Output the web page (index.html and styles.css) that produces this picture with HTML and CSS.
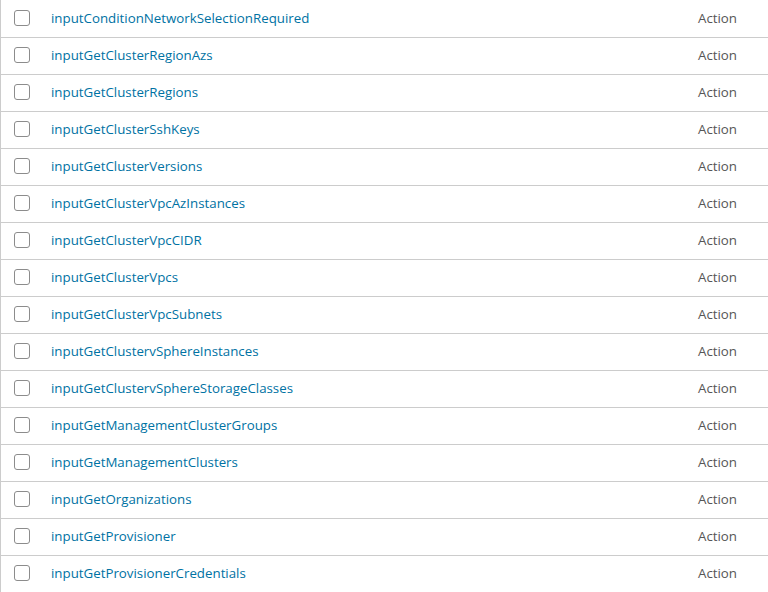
FILE: index.html
```html
<!DOCTYPE html>
<html>
<head>
<meta charset="utf-8">
<link rel="stylesheet" href="styles.css">
</head>
<body>
<div class="grid">
  <div class="row"><span class="check"></span><a class="name">inputConditionNetworkSelectionRequired</a><span class="type">Action</span></div>
  <div class="row"><span class="check"></span><a class="name">inputGetClusterRegionAzs</a><span class="type">Action</span></div>
  <div class="row"><span class="check"></span><a class="name">inputGetClusterRegions</a><span class="type">Action</span></div>
  <div class="row"><span class="check"></span><a class="name">inputGetClusterSshKeys</a><span class="type">Action</span></div>
  <div class="row"><span class="check"></span><a class="name">inputGetClusterVersions</a><span class="type">Action</span></div>
  <div class="row"><span class="check"></span><a class="name">inputGetClusterVpcAzInstances</a><span class="type">Action</span></div>
  <div class="row"><span class="check"></span><a class="name">inputGetClusterVpcCIDR</a><span class="type">Action</span></div>
  <div class="row"><span class="check"></span><a class="name">inputGetClusterVpcs</a><span class="type">Action</span></div>
  <div class="row"><span class="check"></span><a class="name">inputGetClusterVpcSubnets</a><span class="type">Action</span></div>
  <div class="row"><span class="check"></span><a class="name">inputGetClustervSphereInstances</a><span class="type">Action</span></div>
  <div class="row"><span class="check"></span><a class="name">inputGetClustervSphereStorageClasses</a><span class="type">Action</span></div>
  <div class="row"><span class="check"></span><a class="name">inputGetManagementClusterGroups</a><span class="type">Action</span></div>
  <div class="row"><span class="check"></span><a class="name">inputGetManagementClusters</a><span class="type">Action</span></div>
  <div class="row"><span class="check"></span><a class="name">inputGetOrganizations</a><span class="type">Action</span></div>
  <div class="row"><span class="check"></span><a class="name">inputGetProvisioner</a><span class="type">Action</span></div>
  <div class="row"><span class="check"></span><a class="name">inputGetProvisionerCredentials</a><span class="type">Action</span></div>
</div>
</body>
</html>
```
FILE: styles.css
```css
html, body {
  margin: 0;
  padding: 0;
  background: #ffffff;
  overflow: hidden;
}
.grid {
  border-left: 1px solid #cccccc;
  padding-top: 1px;
  font-family: "Open Sans", "Liberation Sans", sans-serif;
  font-size: 13.3px;
}
.row {
  display: flex;
  align-items: center;
  height: 34px;
  padding-bottom: 2px;
  border-bottom: 1px solid #cccccc;
}
.check {
  flex: none;
  width: 14px;
  height: 14px;
  border: 1px solid #8c8c8c;
  border-radius: 3px;
  margin-left: 13px;
  margin-right: 21px;
  background: #fff;
}
.name {
  flex: 1;
  color: #0072a3;
  text-decoration: none;
}
.type {
  width: 70px;
  color: #565656;
}
```
